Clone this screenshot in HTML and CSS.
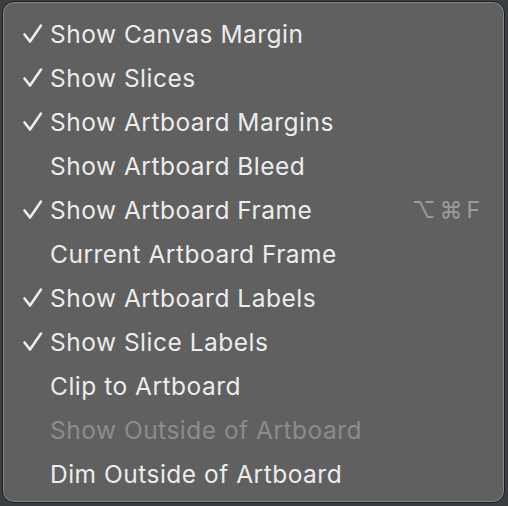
FILE: index.html
```html
<!DOCTYPE html>
<html>
<head>
<meta charset="utf-8">
<link rel="stylesheet" href="styles.css">
</head>
<body>
<div class="menu">
  <div class="item"><span class="check"><svg viewBox="0 0 20 20" width="20" height="20"><path d="M1.5 10.5 L7 17.5 L18 1.5"/></svg></span><span class="label">Show Canvas Margin</span></div>
  <div class="item"><span class="check"><svg viewBox="0 0 20 20" width="20" height="20"><path d="M1.5 10.5 L7 17.5 L18 1.5"/></svg></span><span class="label">Show Slices</span></div>
  <div class="item"><span class="check"><svg viewBox="0 0 20 20" width="20" height="20"><path d="M1.5 10.5 L7 17.5 L18 1.5"/></svg></span><span class="label">Show Artboard Margins</span></div>
  <div class="item"><span class="check"></span><span class="label">Show Artboard Bleed</span></div>
  <div class="item"><span class="check"><svg viewBox="0 0 20 20" width="20" height="20"><path d="M1.5 10.5 L7 17.5 L18 1.5"/></svg></span><span class="label">Show Artboard Frame</span><span class="shortcut">⌥⌘F</span></div>
  <div class="item"><span class="check"></span><span class="label">Current Artboard Frame</span></div>
  <div class="item"><span class="check"><svg viewBox="0 0 20 20" width="20" height="20"><path d="M1.5 10.5 L7 17.5 L18 1.5"/></svg></span><span class="label">Show Artboard Labels</span></div>
  <div class="item"><span class="check"><svg viewBox="0 0 20 20" width="20" height="20"><path d="M1.5 10.5 L7 17.5 L18 1.5"/></svg></span><span class="label">Show Slice Labels</span></div>
  <div class="item"><span class="check"></span><span class="label">Clip to Artboard</span></div>
  <div class="item disabled"><span class="check"></span><span class="label">Show Outside of Artboard</span></div>
  <div class="item"><span class="check"></span><span class="label">Dim Outside of Artboard</span></div>
</div>
</body>
</html>
```
FILE: styles.css
```css
html, body {
  margin: 0;
  padding: 0;
}
body {
  width: 508px;
  height: 506px;
  background: #3a3d42;
  padding: 1px 2px 0 2px;
  box-sizing: border-box;
  font-family: Inter, "Noto Sans", sans-serif;
}
.menu {
  width: 503px;
  height: 502px;
  box-sizing: border-box;
  background: #606060;
  border-radius: 12px;
  border: 1px solid #1f1f1f;
  box-shadow: inset 0 0 0 1px #858585;
  padding: 10px 0 0 0;
  display: flex;
  flex-direction: column;
}
.item {
  height: 44px;
  display: flex;
  align-items: center;
  color: #ececec;
  font-size: 24.5px;
  letter-spacing: 0.5px;
}
.check {
  width: 47px;
  height: 20px;
  padding-left: 20px;
  box-sizing: border-box;
  display: flex;
  align-items: center;
}
.check svg {
  fill: none;
  stroke: #ececec;
  stroke-width: 2.6;
  stroke-linecap: round;
  stroke-linejoin: round;
  overflow: visible;
}
.label {
  flex: 1;
}
.shortcut {
  color: #9c9c9c;
  margin-right: 20px;
  font-size: 23px;
  letter-spacing: 4px;
}
.disabled {
  color: #8c8c8c;
}
```
